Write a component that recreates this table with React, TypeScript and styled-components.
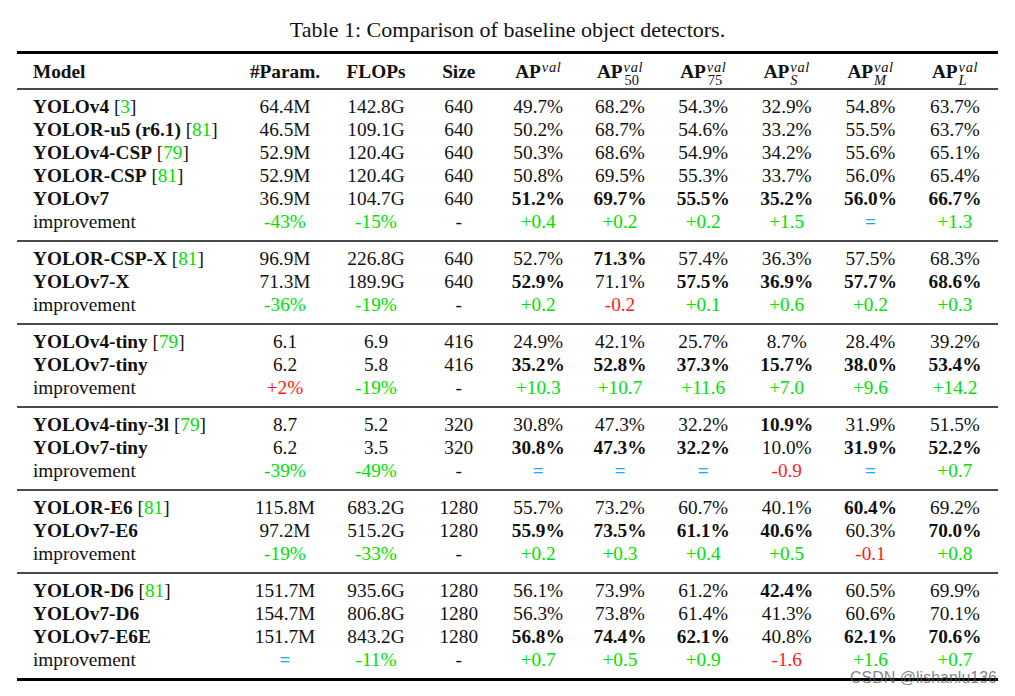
import React from "react";
import styled, { createGlobalStyle } from "styled-components";

type Tone = "plain" | "good" | "bad" | "same";

interface IModelRow {
  name: string;
  cite?: string;
  cells: string[];
}

interface IGroup {
  rows: IModelRow[];
  gain: string[];
}

const COLS = "220.5px 95px 87px 78.5px 80.5px 83px 83.5px 83.5px 84px 85px";

const GlobalStyle = createGlobalStyle`
  html, body {
    margin: 0;
    padding: 0;
    background: #fff;
  }
  body {
    font-family: "Liberation Serif", "Times New Roman", serif;
    color: #111;
  }
`;

const Page = styled.div`
  position: relative;
  width: 1015px;
  height: 696px;
  padding-top: 17px;
  box-sizing: border-box;
`;

const Caption = styled.div`
  text-align: center;
  font-size: 22px;
  line-height: 26px;
  margin-bottom: 8px;
`;

const Table = styled.div`
  margin: 0 17px;
  border-top: 3px solid #000;
  border-bottom: 3px solid #000;
`;

const HeadRow = styled.div`
  display: grid;
  grid-template-columns: ${COLS};
  height: 36px;
  box-sizing: border-box;
  padding-top: 2px;
  align-items: center;
  border-bottom: 2px solid #4a4a4a;
  font-size: 19.3px;
  font-weight: bold;
`;

const HeadCell = styled.span<{ $left?: boolean }>`
  display: flex;
  align-items: flex-start;
  justify-content: ${(p) => (p.$left ? "flex-start" : "center")};
  padding-left: ${(p) => (p.$left ? "16px" : "0")};
  height: 22px;
  white-space: nowrap;
  line-height: 22px;
`;

const ApScripts = styled.span`
  display: inline-flex;
  flex-direction: column;
  font-weight: normal;
  font-size: 14.5px;
  margin: -1px 0 0 1px;
`;

const Sup = styled.span`
  font-style: italic;
  letter-spacing: 0.6px;
  line-height: 14px;
  height: 14px;
`;

const Sub = styled.span<{ $italic?: boolean }>`
  font-style: ${(p) => (p.$italic ? "italic" : "normal")};
  line-height: 13px;
  height: 13px;
  padding-left: ${(p) => (p.$italic ? "0" : "1px")};
`;

const Group = styled.div`
  padding: 5px 0 6.6px;
  & + & {
    border-top: 2px solid #4a4a4a;
  }
`;

const Row = styled.div`
  display: grid;
  grid-template-columns: ${COLS};
  height: 23.1px;
  align-items: center;
  font-size: 19.3px;
`;

const toneColor: Record<Tone, string> = {
  plain: "#111",
  good: "#00e000",
  bad: "#ff1a1a",
  same: "#22a8ec",
};

const Cell = styled.span<{ $bold?: boolean; $tone?: Tone }>`
  text-align: center;
  white-space: nowrap;
  line-height: 23.1px;
  font-weight: ${(p) => (p.$bold || p.$tone === "same" ? "bold" : "normal")};
  color: ${(p) => toneColor[p.$tone || "plain"]};
`;

const ModelCell = styled(Cell)`
  text-align: left;
  padding-left: 16px;
`;

const Cite = styled.span`
  font-weight: normal;
  color: #111;
`;

const CiteNum = styled.span`
  color: #00e000;
`;

const Watermark = styled.div`
  position: absolute;
  right: 18px;
  top: 669px;
  font-family: "Liberation Sans", Arial, sans-serif;
  font-size: 16px;
  line-height: 18px;
  color: rgba(90, 90, 90, 0.75);
`;

const groups: IGroup[] = [
  {
    rows: [
      { name: "YOLOv4", cite: "3", cells: ["64.4M", "142.8G", "640", "49.7%", "68.2%", "54.3%", "32.9%", "54.8%", "63.7%"] },
      { name: "YOLOR-u5 (r6.1)", cite: "81", cells: ["46.5M", "109.1G", "640", "50.2%", "68.7%", "54.6%", "33.2%", "55.5%", "63.7%"] },
      { name: "YOLOv4-CSP", cite: "79", cells: ["52.9M", "120.4G", "640", "50.3%", "68.6%", "54.9%", "34.2%", "55.6%", "65.1%"] },
      { name: "YOLOR-CSP", cite: "81", cells: ["52.9M", "120.4G", "640", "50.8%", "69.5%", "55.3%", "33.7%", "56.0%", "65.4%"] },
      { name: "YOLOv7", cells: ["36.9M", "104.7G", "640", "*51.2%", "*69.7%", "*55.5%", "*35.2%", "*56.0%", "*66.7%"] },
    ],
    gain: ["-43%", "-15%", "-", "+0.4", "+0.2", "+0.2", "+1.5", "=", "+1.3"],
  },
  {
    rows: [
      { name: "YOLOR-CSP-X", cite: "81", cells: ["96.9M", "226.8G", "640", "52.7%", "*71.3%", "57.4%", "36.3%", "57.5%", "68.3%"] },
      { name: "YOLOv7-X", cells: ["71.3M", "189.9G", "640", "*52.9%", "71.1%", "*57.5%", "*36.9%", "*57.7%", "*68.6%"] },
    ],
    gain: ["-36%", "-19%", "-", "+0.2", "-0.2", "+0.1", "+0.6", "+0.2", "+0.3"],
  },
  {
    rows: [
      { name: "YOLOv4-tiny", cite: "79", cells: ["6.1", "6.9", "416", "24.9%", "42.1%", "25.7%", "8.7%", "28.4%", "39.2%"] },
      { name: "YOLOv7-tiny", cells: ["6.2", "5.8", "416", "*35.2%", "*52.8%", "*37.3%", "*15.7%", "*38.0%", "*53.4%"] },
    ],
    gain: ["+2%", "-19%", "-", "+10.3", "+10.7", "+11.6", "+7.0", "+9.6", "+14.2"],
  },
  {
    rows: [
      { name: "YOLOv4-tiny-3l", cite: "79", cells: ["8.7", "5.2", "320", "30.8%", "47.3%", "32.2%", "*10.9%", "31.9%", "51.5%"] },
      { name: "YOLOv7-tiny", cells: ["6.2", "3.5", "320", "*30.8%", "*47.3%", "*32.2%", "10.0%", "*31.9%", "*52.2%"] },
    ],
    gain: ["-39%", "-49%", "-", "=", "=", "=", "-0.9", "=", "+0.7"],
  },
  {
    rows: [
      { name: "YOLOR-E6", cite: "81", cells: ["115.8M", "683.2G", "1280", "55.7%", "73.2%", "60.7%", "40.1%", "*60.4%", "69.2%"] },
      { name: "YOLOv7-E6", cells: ["97.2M", "515.2G", "1280", "*55.9%", "*73.5%", "*61.1%", "*40.6%", "60.3%", "*70.0%"] },
    ],
    gain: ["-19%", "-33%", "-", "+0.2", "+0.3", "+0.4", "+0.5", "-0.1", "+0.8"],
  },
  {
    rows: [
      { name: "YOLOR-D6", cite: "81", cells: ["151.7M", "935.6G", "1280", "56.1%", "73.9%", "61.2%", "*42.4%", "60.5%", "69.9%"] },
      { name: "YOLOv7-D6", cells: ["154.7M", "806.8G", "1280", "56.3%", "73.8%", "61.4%", "41.3%", "60.6%", "70.1%"] },
      { name: "YOLOv7-E6E", cells: ["151.7M", "843.2G", "1280", "*56.8%", "*74.4%", "*62.1%", "40.8%", "*62.1%", "*70.6%"] },
    ],
    gain: ["=", "-11%", "-", "+0.7", "+0.5", "+0.9", "-1.6", "+1.6", "+0.7"],
  },
];

const apHeads = [
  { sub: "" },
  { sub: "50" },
  { sub: "75" },
  { sub: "S", italic: true },
  { sub: "M", italic: true },
  { sub: "L", italic: true },
];

// fewer params / flops is good, more AP is good
const toneOf = (value: string, col: number): Tone => {
  if (value === "=") return "same";
  if (value === "-") return "plain";
  const up = value.startsWith("+");
  if (col < 2) return up ? "bad" : "good";
  return up ? "good" : "bad";
};

const App: React.FC = () => {
  return (
    <Page>
      <GlobalStyle />
      <Caption>Table 1: Comparison of baseline object detectors.</Caption>
      <Table>
        <HeadRow>
          <HeadCell $left>Model</HeadCell>
          <HeadCell>#Param.</HeadCell>
          <HeadCell>FLOPs</HeadCell>
          <HeadCell>Size</HeadCell>
          {apHeads.map((h, i) => (
            <HeadCell key={i}>
              AP
              <ApScripts>
                <Sup>val</Sup>
                <Sub $italic={h.italic}>{h.sub}</Sub>
              </ApScripts>
            </HeadCell>
          ))}
        </HeadRow>
        {groups.map((group, gi) => (
          <Group key={gi}>
            {group.rows.map((row) => (
              <Row key={row.name}>
                <ModelCell $bold>
                  {row.name}
                  {row.cite && (
                    <Cite>
                      {" "}[<CiteNum>{row.cite}</CiteNum>]
                    </Cite>
                  )}
                </ModelCell>
                {row.cells.map((c, ci) => (
                  <Cell key={ci} $bold={c.startsWith("*")}>
                    {c.replace("*", "")}
                  </Cell>
                ))}
              </Row>
            ))}
            <Row>
              <ModelCell>improvement</ModelCell>
              {group.gain.map((g, ci) => (
                <Cell key={ci} $tone={toneOf(g, ci)}>
                  {g}
                </Cell>
              ))}
            </Row>
          </Group>
        ))}
      </Table>
      <Watermark>CSDN @lishanlu136</Watermark>
    </Page>
  );
};

export default App;
